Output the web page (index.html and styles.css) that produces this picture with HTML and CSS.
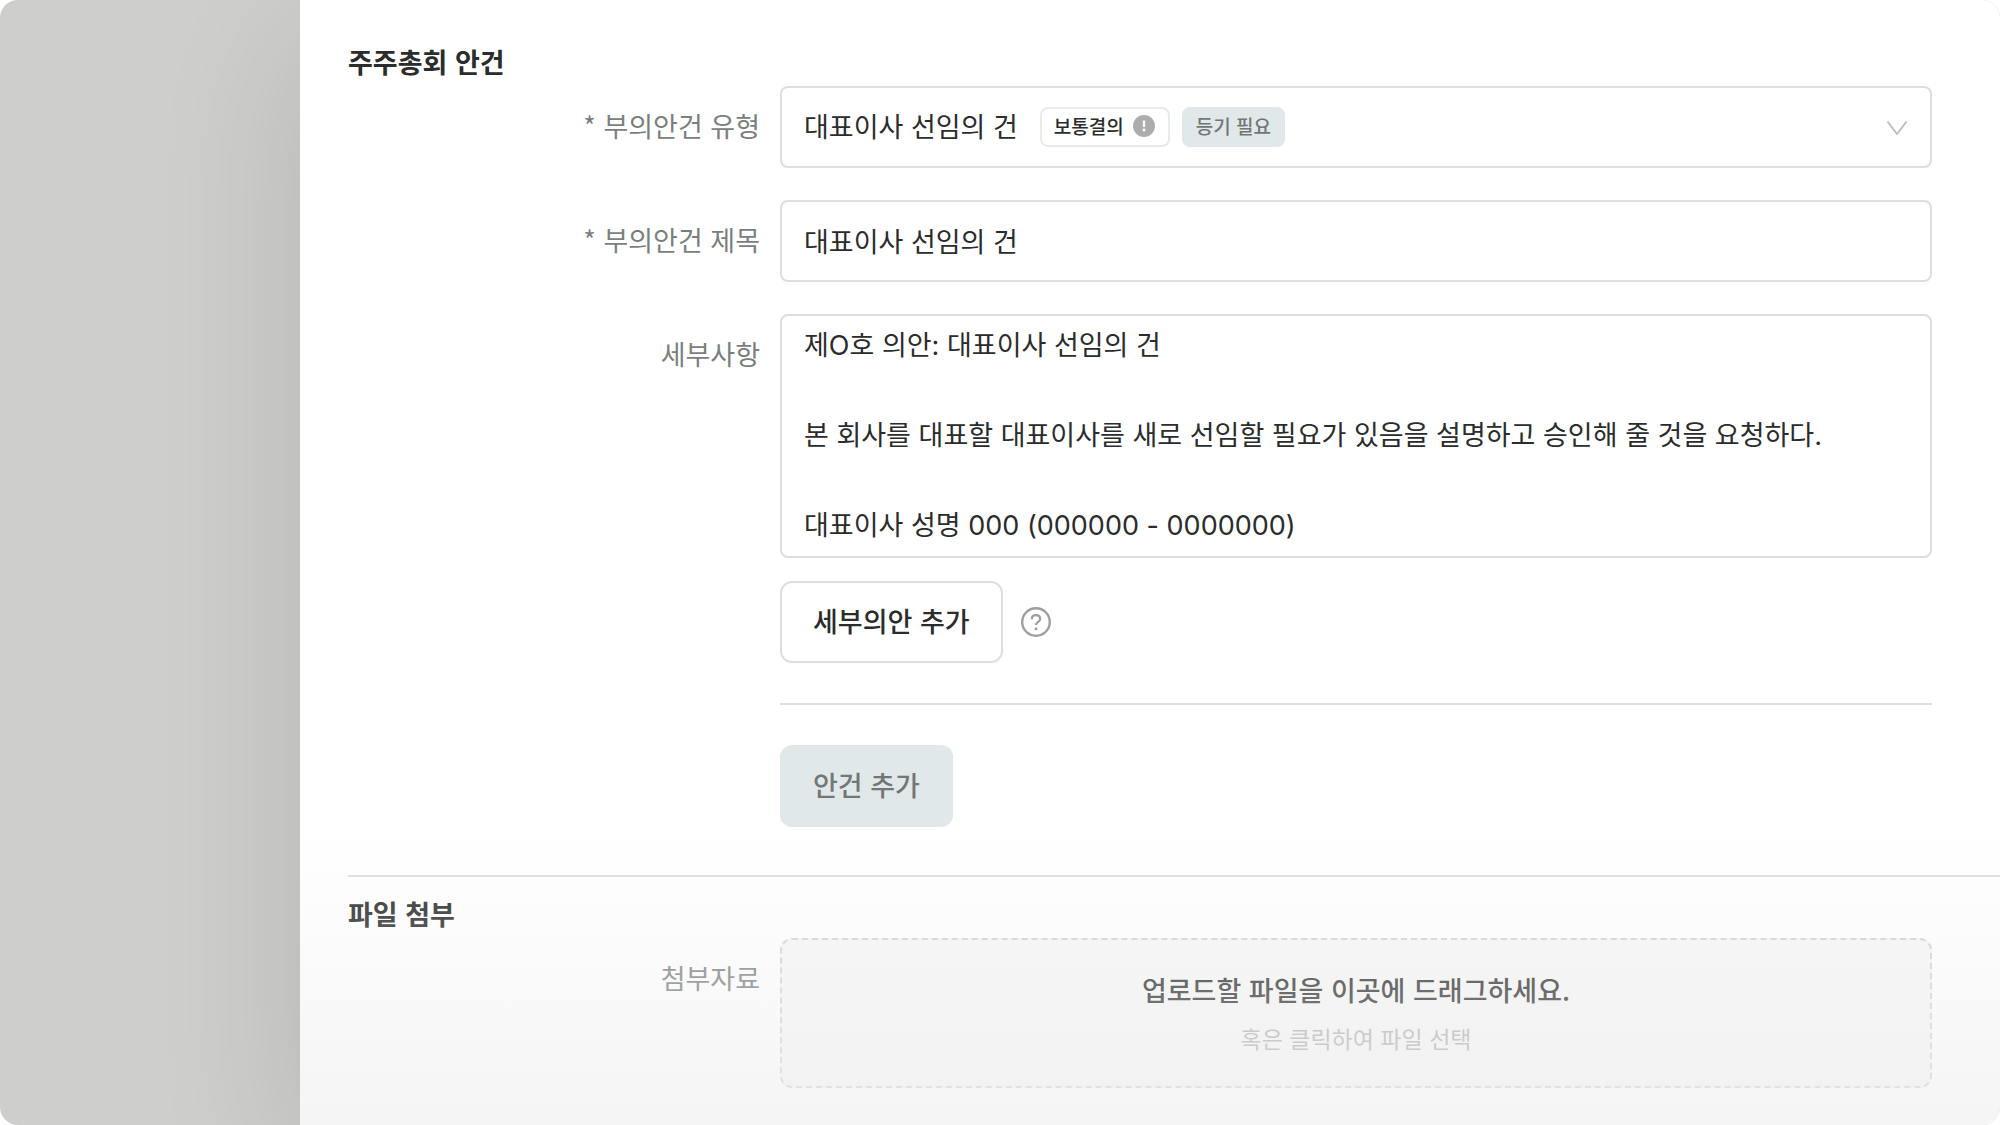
FILE: index.html
```html
<!DOCTYPE html>
<html lang="ko">
<head>
<meta charset="utf-8">
<meta name="viewport" content="width=device-width, initial-scale=1">
<title>주주총회 안건</title>
<link rel="stylesheet" href="styles.css">
</head>
<body>
<div class="app">
  <main class="drawer">
    <form class="form">
      <section class="section">
        <h2 class="section-title">주주총회 안건</h2>
        <div class="row">
          <label class="label" for="type"><span class="required">*</span> 부의안건 유형</label>
          <div class="control select-box">
            <select id="type" class="select">
              <option>대표이사 선임의 건</option>
            </select>
            <span class="tag">보통결의
              <svg class="tag-icon" viewBox="0 0 22 22" aria-hidden="true"><circle cx="11" cy="11" r="11" fill="#abadad"/><path d="M11 5.500v6.500" stroke="#fff" stroke-width="2.400"/><circle cx="11" cy="15" r="1.400" fill="#fff"/></svg>
            </span>
            <span class="tag tag-filled">등기 필요</span>
            <svg class="chevron" viewBox="0 0 22 16" aria-hidden="true"><path d="M1.500 2.500 11 15l9.500-12.500" fill="none" stroke="#bfc1c1" stroke-width="2"/></svg>
          </div>
        </div>
        <div class="row">
          <label class="label" for="title"><span class="required">*</span> 부의안건 제목</label>
          <input id="title" class="control input" type="text" value="대표이사 선임의 건">
        </div>
        <div class="row">
          <label class="label" for="detail">세부사항</label>
          <div class="stack">
            <textarea id="detail" class="control textarea" rows="5">제O호 의안: 대표이사 선임의 건

본 회사를 대표할 대표이사를 새로 선임할 필요가 있음을 설명하고 승인해 줄 것을 요청하다.

대표이사 성명 000 (000000 - 0000000)</textarea>
            <div class="actions">
              <button type="button" class="button">세부의안 추가</button>
              <button type="button" class="help" aria-label="도움말">
                <svg viewBox="0 0 30 30" aria-hidden="true"><g fill="none" stroke="#9b9f9e"><circle cx="15" cy="15" r="13.800" stroke-width="2.400"/><path d="M10.800 12.200c0-2.500 1.800-4 4.200-4s4.200 1.500 4.200 3.700c0 3-4.200 3-4.200 6.200" stroke-width="2.200"/></g><circle cx="15" cy="21.800" r="1.500" fill="#9b9f9e"/></svg>
              </button>
            </div>
            <hr class="divider">
            <button type="button" class="button button-filled">안건 추가</button>
          </div>
        </div>
      </section>
      <section class="section section-files">
        <h2 class="section-title">파일 첨부</h2>
        <div class="row">
          <label class="label" for="files">첨부자료</label>
          <button type="button" id="files" class="dropzone">
            <span class="drop-title">업로드할 파일을 이곳에 드래그하세요.</span>
            <span class="drop-hint">혹은 클릭하여 파일 선택</span>
          </button>
        </div>
      </section>
    </form>
  </main>
</div>
</body>
</html>
```
FILE: styles.css
```css
* {
  box-sizing: border-box;
}

body {
  margin: 0;
  background: #fff;
  color: #2b2c2c;
  font-family: "Noto Sans CJK KR", sans-serif;
  font-size: 27px;
  line-height: 40px;
}

button,
input,
select,
textarea {
  margin: 0;
  color: inherit;
  font: inherit;
}

.app {
  display: flex;
  min-height: 100vh;
  padding-left: 300px;
  overflow: hidden;
  border-radius: 18px;
  background: #cececc;
}

.drawer {
  position: relative;
  flex: 1;
  min-width: 0;
  background: #fff;
  box-shadow: 0 40px 140px rgba(0, 0, 0, 0.12);
}

/* Fade over the lower part of the drawer */
.drawer::after {
  content: "";
  position: absolute;
  inset: auto 0 0;
  height: 300px;
  background: linear-gradient(rgba(238, 238, 238, 0), rgba(238, 238, 238, 0.6));
  pointer-events: none;
}

.form {
  padding: 42px 0 36px 48px;
}

.section-title {
  margin: 0 0 4px;
  font-size: 27px;
  font-weight: 700;
  line-height: 40px;
}

.section-files {
  margin-top: 48px;
  padding-top: 17px;
  border-top: 2px solid #dcdfdf;
}

.row {
  display: grid;
  grid-template-columns: 412px minmax(0, 1fr);
  column-gap: 20px;
  padding-right: 68px;
}

.row + .row {
  margin-top: 32px;
}

.label {
  color: #7a7f7e;
  line-height: 80px;
  text-align: right;
}

.control {
  width: 100%;
  border: 2px solid #dcdfdf;
  border-radius: 8px;
  background: #fff;
  outline: none;
}

.select-box {
  display: flex;
  align-items: center;
  height: 82px;
  padding: 0 22px;
}

.select {
  field-sizing: content;
  appearance: none;
  margin-right: 22px;
  padding: 0 0 2px;
  border: 0;
  background: none;
  outline: none;
}

.tag {
  display: flex;
  align-items: center;
  gap: 9px;
  height: 40px;
  margin-right: 12px;
  padding: 0 13px 2px 12px;
  border: 2px solid #e8eaea;
  border-radius: 8px;
  font-size: 19px;
  font-weight: 500;
}

.tag-filled {
  padding: 0 12px 2px;
  border-color: #e0e8e9;
  background: #e0e8e9;
  color: #727776;
}

.tag-icon {
  width: 22px;
  height: 22px;
}

.chevron {
  width: 22px;
  height: 16px;
  margin-left: auto;
}

.input {
  height: 82px;
  padding: 0 22px 2px;
}

.textarea {
  display: block;
  height: 244px;
  padding: 7px 22px;
  line-height: 45px;
  font-family: Inter, "Noto Sans CJK KR", sans-serif;
  resize: none;
  overflow: hidden;
}

.actions {
  display: flex;
  align-items: center;
  gap: 18px;
  margin-top: 23px;
}

.button {
  height: 82px;
  padding: 0 31px 2px;
  border: 2px solid #dcdfdf;
  border-radius: 12px;
  background: #fff;
  font-weight: 500;
}

.button-filled {
  border-color: #e0e8e9;
  background: #e0e8e9;
  color: #727776;
}

.help {
  width: 30px;
  height: 30px;
  padding: 0;
  border: 0;
  background: none;
}

.help svg {
  display: block;
}

.divider {
  height: 2px;
  margin: 40px 0;
  border: 0;
  background: #dcdfdf;
}

.dropzone {
  display: flex;
  flex-direction: column;
  align-items: center;
  gap: 6px;
  padding: 28px 22px;
  border: 2px dashed #d0d5d5;
  border-radius: 12px;
  background: #f7f7f7;
}

.drop-title {
  font-weight: 500;
  line-height: 44px;
}

.drop-hint {
  color: #aeb2b1;
  font-size: 23px;
  line-height: 40px;
}
```
